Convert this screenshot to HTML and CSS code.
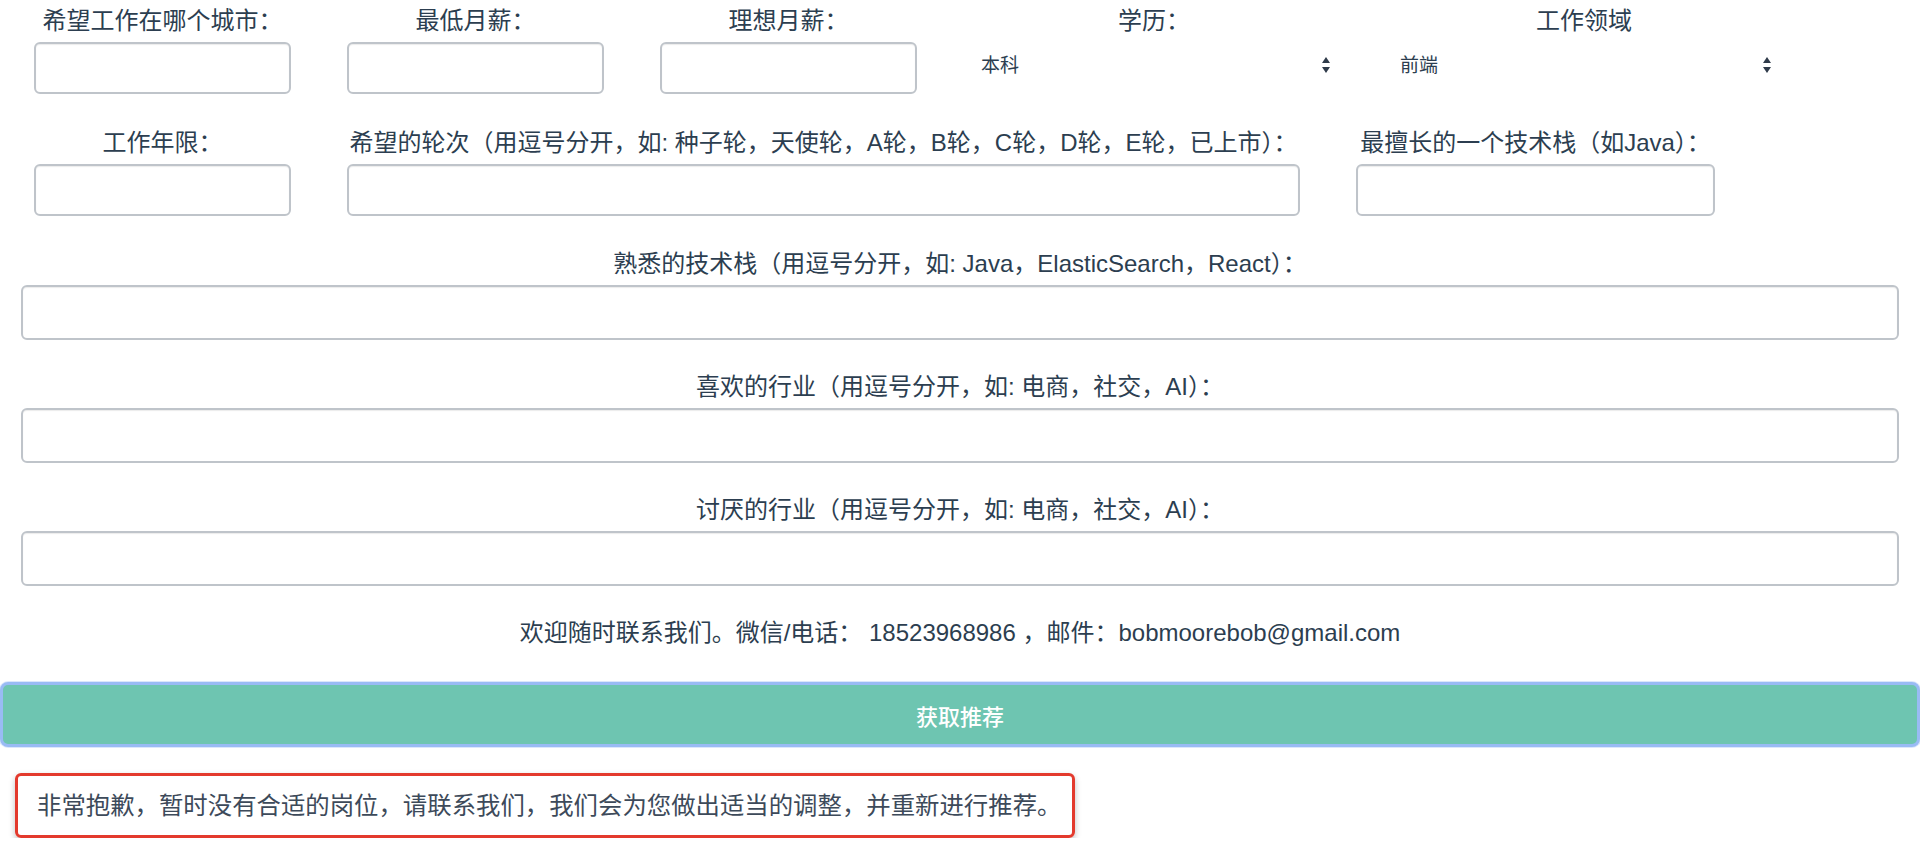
FILE: index.html
```html
<!DOCTYPE html>
<html lang="zh-CN">
<head>
    <meta charset="UTF-8">
    <meta name="viewport" content="width=device-width, initial-scale=1.0">
    <title>职位推荐</title>
    <link rel="stylesheet" href="styles.css">
</head>
<body>
    <div id="app">
        <div class="row">
            <div class="field">
                <label class="field-label">希望工作在哪个城市：</label>
                <input class="field-input" type="text">
            </div>
            <div class="field">
                <label class="field-label">最低月薪：</label>
                <input class="field-input" type="text">
            </div>
            <div class="field">
                <label class="field-label">理想月薪：</label>
                <input class="field-input" type="text">
            </div>
            <div class="field field-edu">
                <label class="field-label">学历：</label>
                <div class="select-wrap">
                    <select class="field-select">
                        <option>本科</option>
                        <option>硕士</option>
                        <option>博士</option>
                        <option>大专</option>
                    </select>
                    <svg class="select-arrow" viewBox="0 0 8 16"><polygon points="4,0 8,6 0,6"/><polygon points="0,10 8,10 4,16"/></svg>
                </div>
            </div>
            <div class="field field-area">
                <label class="field-label">工作领域</label>
                <div class="select-wrap">
                    <select class="field-select">
                        <option>前端</option>
                        <option>后端</option>
                        <option>移动端</option>
                        <option>算法</option>
                    </select>
                    <svg class="select-arrow" viewBox="0 0 8 16"><polygon points="4,0 8,6 0,6"/><polygon points="0,10 8,10 4,16"/></svg>
                </div>
            </div>
        </div>

        <div class="row">
            <div class="field">
                <label class="field-label">工作年限：</label>
                <input class="field-input" type="text">
            </div>
            <div class="field field-rounds">
                <label class="field-label">希望的轮次（用逗号分开，如: 种子轮，天使轮，A轮，B轮，C轮，D轮，E轮，已上市）：</label>
                <input class="field-input" type="text">
            </div>
            <div class="field field-main">
                <label class="field-label">最擅长的一个技术栈（如Java）：</label>
                <input class="field-input" type="text">
            </div>
        </div>

        <div class="field-wide">
            <label class="field-label">熟悉的技术栈（用逗号分开，如: Java，ElasticSearch，React）：</label>
            <input class="field-input" type="text">
        </div>

        <div class="field-wide">
            <label class="field-label">喜欢的行业（用逗号分开，如: 电商，社交，AI）：</label>
            <input class="field-input" type="text">
        </div>

        <div class="field-wide">
            <label class="field-label">讨厌的行业（用逗号分开，如: 电商，社交，AI）：</label>
            <input class="field-input" type="text">
        </div>

        <p class="contact">欢迎随时联系我们。微信/电话： 18523968986 ，邮件：bobmoorebob@gmail.com</p>

        <button class="btn" id="recommendBtn">获取推荐</button>

        <div class="result">
            <div class="result-box">非常抱歉，暂时没有合适的岗位，请联系我们，我们会为您做出适当的调整，并重新进行推荐。</div>
        </div>
    </div>
</body>
</html>
```

FILE: styles.css
```css
body {
    margin: 0;
    background-color: #fff;
}
#app {
    font-family: 'Liberation Sans', 'Noto Sans CJK SC', sans-serif;
    color: #2c3e50;
    padding-top: 6px;
}
.row {
    display: flex;
    gap: 56px;
    padding-left: 34px;
    margin-bottom: 34px;
}
.row + .row {
    margin-bottom: 33px;
}
.field {
    display: flex;
    flex-direction: column;
    width: 257px;
}
.field-label {
    display: block;
    font-size: 24px;
    line-height: 30px;
    text-align: center;
    white-space: nowrap;
}
.field-input {
    box-sizing: border-box;
    width: 100%;
    height: 52px;
    margin-top: 6px;
    padding: 0 12px;
    border: 2px solid #bfc4ca;
    border-radius: 6px;
    box-shadow: inset 0 1px 1px rgba(0,0,0,0.08);
    background-color: #fff;
    font-size: 20px;
    outline: none;
}
.field-edu {
    width: 378px;
    margin-left: -8px;
}
.field-area {
    width: 400px;
    margin-left: -15px;
}
.field-rounds {
    width: 953px;
}
.field-main {
    width: 359px;
}
.select-wrap {
    position: relative;
    margin-top: 6px;
}
.field-select {
    width: 100%;
    height: 46px;
    padding: 0 16px;
    border: none;
    background: transparent;
    -webkit-appearance: none;
    appearance: none;
    font-family: 'Liberation Sans', 'Noto Sans CJK SC', sans-serif;
    font-size: 19px;
    color: #2c3e50;
    outline: none;
}
.select-arrow {
    position: absolute;
    right: 13px;
    top: 15px;
    width: 8px;
    height: 16px;
    fill: #2f3b4a;
    pointer-events: none;
}
.field-wide {
    padding: 0 21px;
    margin-bottom: 32px;
}
.field-wide .field-input {
    height: 55px;
    margin-top: 6px;
}
.contact {
    margin: 32px 0 0;
    font-size: 24px;
    line-height: 30px;
    text-align: center;
}
.btn {
    display: block;
    box-sizing: border-box;
    width: 100%;
    height: 65px;
    margin-top: 34px;
    border: 3px solid #99bbf4;
    border-radius: 8px;
    box-shadow: 0 0 0 1px rgba(153,187,244,0.35);
    background-color: #6ec5b1;
    color: #fff;
    font-family: 'Liberation Sans', 'Noto Sans CJK SC', sans-serif;
    font-size: 22px;
    font-weight: 500;
    cursor: pointer;
}
.result {
    padding-left: 15px;
    margin-top: 26px;
}
.result-box {
    display: inline-block;
    box-sizing: border-box;
    height: 65px;
    padding: 0 11px 0 19px;
    border: 3px solid #e33a2d;
    border-radius: 6px;
    box-shadow: 0 3px 6px rgba(0,0,0,0.25);
    font-size: 24.4px;
    line-height: 59px;
    color: #3d4a5a;
}
```
